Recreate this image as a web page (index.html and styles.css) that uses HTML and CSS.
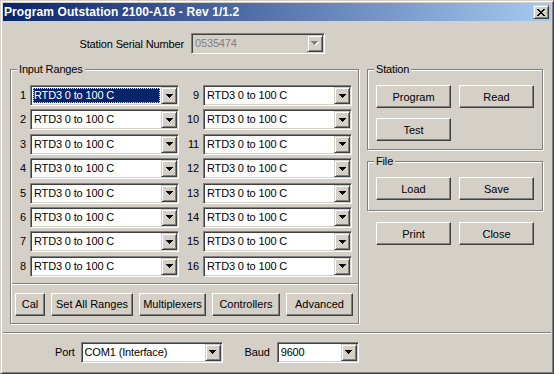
FILE: index.html
```html
<!DOCTYPE html>
<html lang="en">
<head>
  <meta charset="UTF-8">
  <title>Program Outstation 2100-A16 - Rev 1/1.2</title>
  <link rel="stylesheet" href="styles.css">
</head>
<body>
<div class="window">
  <!-- Caption -->
  <div class="titlebar">
    <span class="title-text">Program Outstation 2100-A16 - Rev 1/1.2</span>
    <button class="title-close" title="Close">
      <svg width="8" height="7" viewBox="0 0 8 7" shape-rendering="crispEdges">
        <path d="M0 0h2v1H0zM6 0h2v1H6zM1 1h2v1H1zM5 1h2v1H5zM2 2h4v1H2zM3 3h2v1H3zM2 4h4v1H2zM1 5h2v1H1zM5 5h2v1H5zM0 6h2v1H0zM6 6h2v1H6z" fill="#000"/>
      </svg>
    </button>
  </div>

  <div class="client">
    <!-- Serial number -->
    <div class="serial-row">
      <span class="serial-label">Station Serial Number</span>
      <div class="combo combo-disabled combo-serial">
        <span class="combo-text">0535474</span>
        <span class="combo-btn">
          <svg width="8" height="5" viewBox="0 0 8 5" shape-rendering="crispEdges">
            <path d="M1 1h7v1H1zM2 2h5v1H2zM3 3h3v1H3zM4 4h1v1H4z" fill="#fff"/>
            <path d="M0 0h7v1H0zM1 1h5v1H1zM2 2h3v1H2zM3 3h1v1H3z" fill="#808080"/>
          </svg>
        </span>
      </div>
    </div>

    <div class="main">
      <!-- Input ranges -->
      <div class="group group-ranges">
        <div class="group-title">Input Ranges</div>
        <div class="ranges">
          <span class="range-num">1</span>
          <div class="combo"><span class="combo-text selected">RTD3 0 to 100 C</span><span class="combo-btn"><svg width="7" height="4" viewBox="0 0 7 4" shape-rendering="crispEdges"><path d="M0 0h7v1H0zM1 1h5v1H1zM2 2h3v1H2zM3 3h1v1H3z"/></svg></span></div>
          <span class="range-num">9</span>
          <div class="combo"><span class="combo-text">RTD3 0 to 100 C</span><span class="combo-btn"><svg width="7" height="4" viewBox="0 0 7 4" shape-rendering="crispEdges"><path d="M0 0h7v1H0zM1 1h5v1H1zM2 2h3v1H2zM3 3h1v1H3z"/></svg></span></div>

          <span class="range-num">2</span>
          <div class="combo"><span class="combo-text">RTD3 0 to 100 C</span><span class="combo-btn"><svg width="7" height="4" viewBox="0 0 7 4" shape-rendering="crispEdges"><path d="M0 0h7v1H0zM1 1h5v1H1zM2 2h3v1H2zM3 3h1v1H3z"/></svg></span></div>
          <span class="range-num">10</span>
          <div class="combo"><span class="combo-text">RTD3 0 to 100 C</span><span class="combo-btn"><svg width="7" height="4" viewBox="0 0 7 4" shape-rendering="crispEdges"><path d="M0 0h7v1H0zM1 1h5v1H1zM2 2h3v1H2zM3 3h1v1H3z"/></svg></span></div>

          <span class="range-num">3</span>
          <div class="combo"><span class="combo-text">RTD3 0 to 100 C</span><span class="combo-btn"><svg width="7" height="4" viewBox="0 0 7 4" shape-rendering="crispEdges"><path d="M0 0h7v1H0zM1 1h5v1H1zM2 2h3v1H2zM3 3h1v1H3z"/></svg></span></div>
          <span class="range-num">11</span>
          <div class="combo"><span class="combo-text">RTD3 0 to 100 C</span><span class="combo-btn"><svg width="7" height="4" viewBox="0 0 7 4" shape-rendering="crispEdges"><path d="M0 0h7v1H0zM1 1h5v1H1zM2 2h3v1H2zM3 3h1v1H3z"/></svg></span></div>

          <span class="range-num">4</span>
          <div class="combo"><span class="combo-text">RTD3 0 to 100 C</span><span class="combo-btn"><svg width="7" height="4" viewBox="0 0 7 4" shape-rendering="crispEdges"><path d="M0 0h7v1H0zM1 1h5v1H1zM2 2h3v1H2zM3 3h1v1H3z"/></svg></span></div>
          <span class="range-num">12</span>
          <div class="combo"><span class="combo-text">RTD3 0 to 100 C</span><span class="combo-btn"><svg width="7" height="4" viewBox="0 0 7 4" shape-rendering="crispEdges"><path d="M0 0h7v1H0zM1 1h5v1H1zM2 2h3v1H2zM3 3h1v1H3z"/></svg></span></div>

          <span class="range-num">5</span>
          <div class="combo"><span class="combo-text">RTD3 0 to 100 C</span><span class="combo-btn"><svg width="7" height="4" viewBox="0 0 7 4" shape-rendering="crispEdges"><path d="M0 0h7v1H0zM1 1h5v1H1zM2 2h3v1H2zM3 3h1v1H3z"/></svg></span></div>
          <span class="range-num">13</span>
          <div class="combo"><span class="combo-text">RTD3 0 to 100 C</span><span class="combo-btn"><svg width="7" height="4" viewBox="0 0 7 4" shape-rendering="crispEdges"><path d="M0 0h7v1H0zM1 1h5v1H1zM2 2h3v1H2zM3 3h1v1H3z"/></svg></span></div>

          <span class="range-num">6</span>
          <div class="combo"><span class="combo-text">RTD3 0 to 100 C</span><span class="combo-btn"><svg width="7" height="4" viewBox="0 0 7 4" shape-rendering="crispEdges"><path d="M0 0h7v1H0zM1 1h5v1H1zM2 2h3v1H2zM3 3h1v1H3z"/></svg></span></div>
          <span class="range-num">14</span>
          <div class="combo"><span class="combo-text">RTD3 0 to 100 C</span><span class="combo-btn"><svg width="7" height="4" viewBox="0 0 7 4" shape-rendering="crispEdges"><path d="M0 0h7v1H0zM1 1h5v1H1zM2 2h3v1H2zM3 3h1v1H3z"/></svg></span></div>

          <span class="range-num">7</span>
          <div class="combo"><span class="combo-text">RTD3 0 to 100 C</span><span class="combo-btn"><svg width="7" height="4" viewBox="0 0 7 4" shape-rendering="crispEdges"><path d="M0 0h7v1H0zM1 1h5v1H1zM2 2h3v1H2zM3 3h1v1H3z"/></svg></span></div>
          <span class="range-num">15</span>
          <div class="combo"><span class="combo-text">RTD3 0 to 100 C</span><span class="combo-btn"><svg width="7" height="4" viewBox="0 0 7 4" shape-rendering="crispEdges"><path d="M0 0h7v1H0zM1 1h5v1H1zM2 2h3v1H2zM3 3h1v1H3z"/></svg></span></div>

          <span class="range-num">8</span>
          <div class="combo"><span class="combo-text">RTD3 0 to 100 C</span><span class="combo-btn"><svg width="7" height="4" viewBox="0 0 7 4" shape-rendering="crispEdges"><path d="M0 0h7v1H0zM1 1h5v1H1zM2 2h3v1H2zM3 3h1v1H3z"/></svg></span></div>
          <span class="range-num">16</span>
          <div class="combo"><span class="combo-text">RTD3 0 to 100 C</span><span class="combo-btn"><svg width="7" height="4" viewBox="0 0 7 4" shape-rendering="crispEdges"><path d="M0 0h7v1H0zM1 1h5v1H1zM2 2h3v1H2zM3 3h1v1H3z"/></svg></span></div>
        </div>

        <div class="etched-line ranges-line"></div>

        <div class="range-buttons">
          <button class="btn btn-cal">Cal</button>
          <button class="btn btn-setall">Set All Ranges</button>
          <button class="btn btn-mux">Multiplexers</button>
          <button class="btn btn-ctrl">Controllers</button>
          <button class="btn btn-adv">Advanced</button>
        </div>
      </div>

      <!-- Right side -->
      <div class="side">
        <div class="group group-station">
          <div class="group-title">Station</div>
          <div class="btn-grid">
            <button class="btn">Program</button>
            <button class="btn">Read</button>
            <button class="btn">Test</button>
          </div>
        </div>

        <div class="group group-file">
          <div class="group-title">File</div>
          <div class="btn-grid">
            <button class="btn">Load</button>
            <button class="btn">Save</button>
          </div>
        </div>

        <div class="btn-grid side-actions">
          <button class="btn">Print</button>
          <button class="btn">Close</button>
        </div>
      </div>
    </div>

    <div class="etched-line footer-line"></div>

    <!-- Comms -->
    <div class="comm-row">
      <span class="comm-label">Port</span>
      <div class="combo combo-port"><span class="combo-text">COM1 (Interface)</span><span class="combo-btn"><svg width="7" height="4" viewBox="0 0 7 4" shape-rendering="crispEdges"><path d="M0 0h7v1H0zM1 1h5v1H1zM2 2h3v1H2zM3 3h1v1H3z"/></svg></span></div>
      <span class="comm-label comm-baud">Baud</span>
      <div class="combo combo-baud"><span class="combo-text">9600</span><span class="combo-btn"><svg width="7" height="4" viewBox="0 0 7 4" shape-rendering="crispEdges"><path d="M0 0h7v1H0zM1 1h5v1H1zM2 2h3v1H2zM3 3h1v1H3z"/></svg></span></div>
    </div>
  </div>
</div>
</body>
</html>
```

FILE: styles.css
```css
* {
  box-sizing: border-box;
}

body {
  margin: 0;
  background: #d4d0c8;
  font-family: "Liberation Sans", Arial, sans-serif;
  font-size: 11px;
  letter-spacing: -0.15px;
  color: #000;
}

/* window frame */
.window {
  width: 554px;
  height: 374px;
  border: 1px solid;
  border-color: #d4d0c8 #404040 #404040 #d4d0c8;
  box-shadow: inset 1px 1px #fff, inset -1px -1px #808080;
  padding: 2px;
  background: #d4d0c8;
}

.titlebar {
  height: 18px;
  display: flex;
  align-items: center;
  padding: 0 2px 0 1px;
  background: linear-gradient(to right, #0a246a, #a6caf0);
}

.title-text {
  flex: 1;
  color: #fff;
  font-weight: bold;
  font-size: 12px;
  letter-spacing: 0.1px;
  white-space: nowrap;
}

.title-close {
  width: 16px;
  height: 14px;
  padding: 0;
  border: 1px solid;
  border-color: #d4d0c8 #404040 #404040 #d4d0c8;
  box-shadow: inset 1px 1px #fff, inset -1px -1px #808080;
  background: #d4d0c8;
  display: flex;
  align-items: center;
  justify-content: center;
}

.client {
  height: 350px;
}

/* serial number row */
.serial-row {
  display: flex;
  align-items: center;
  padding-top: 12px;
}

.serial-label {
  width: 181px;
  text-align: right;
  margin-right: 7px;
}

.combo-serial {
  width: 134px;
}

/* combo box */
.combo {
  height: 21px;
  display: flex;
  align-items: stretch;
  padding: 1px;
  border: 1px solid;
  border-color: #808080 #fff #fff #808080;
  box-shadow: inset 1px 1px #404040, inset -1px -1px #d4d0c8;
  background: #fff;
}

.combo-text {
  flex: 1;
  margin: 1px;
  padding-left: 1px;
  height: 15px;
  line-height: 15px;
  white-space: nowrap;
  overflow: hidden;
}

.combo-text.selected {
  background: #0a246a;
  color: #fff;
  outline: 1px dotted #f5db95;
  outline-offset: -1px;
}

.combo-btn {
  width: 16px;
  border: 1px solid;
  border-color: #d4d0c8 #404040 #404040 #d4d0c8;
  box-shadow: inset 1px 1px #fff, inset -1px -1px #808080;
  background: #d4d0c8;
  display: flex;
  align-items: center;
  justify-content: center;
}

.combo-disabled {
  background: #d4d0c8;
  color: #808080;
}

/* group boxes */
.main {
  display: flex;
  align-items: flex-start;
  gap: 8px;
  margin-top: 15px;
  padding-left: 7px;
}

.group {
  border: 1px solid #808080;
  box-shadow: inset 1px 1px #fff, 1px 1px #fff;
}

.group-title {
  width: fit-content;
  margin: -7px 0 0 6px;
  padding: 0 2px;
  line-height: 13px;
  background: #d4d0c8;
}

.group-ranges {
  width: 349px;
}

.ranges {
  display: grid;
  grid-template-columns: 19px 149px 24px 149px;
  grid-auto-rows: 21px;
  row-gap: 3.4px;
  margin-top: 9px;
}

.range-num {
  text-align: right;
  padding-right: 4px;
  line-height: 21px;
}

.etched-line {
  height: 2px;
  border-top: 1px solid #808080;
  border-bottom: 1px solid #fff;
}

.ranges-line {
  margin: 6px 0 0 1px;
}

.range-buttons {
  display: flex;
  justify-content: space-between;
  margin: 8px 0 7px;
  padding: 0 5px 0 4px;
}

/* push buttons */
.btn {
  height: 23px;
  padding: 0;
  font: inherit;
  color: #000;
  background: #d4d0c8;
  border: 1px solid;
  border-color: #fff #404040 #404040 #fff;
  box-shadow: inset -1px -1px #808080;
}

.btn-cal { width: 30px; }
.btn-setall { width: 82px; }
.btn-mux { width: 67px; }
.btn-ctrl { width: 68px; }
.btn-adv { width: 67px; }

.side {
  width: 176px;
}

.btn-grid {
  display: grid;
  grid-template-columns: 75px 75px;
  gap: 10px 8px;
  margin-top: 9px;
  padding: 0 8px 8px;
}

.group-file {
  margin-top: 11px;
}

.group-file .btn-grid {
  padding-bottom: 10px;
}

.side-actions {
  margin-top: 11px;
  padding: 0 0 0 9px;
}

.footer-line {
  margin-top: 8px;
}

/* port / baud */
.comm-row {
  display: flex;
  align-items: center;
  margin-top: 8px;
  padding-left: 52px;
}

.comm-label {
  margin-right: 6px;
}

.comm-baud {
  margin-left: 22px;
  margin-right: 7px;
}

.combo-port {
  width: 142px;
}

.combo-baud {
  width: 82px;
}
```
